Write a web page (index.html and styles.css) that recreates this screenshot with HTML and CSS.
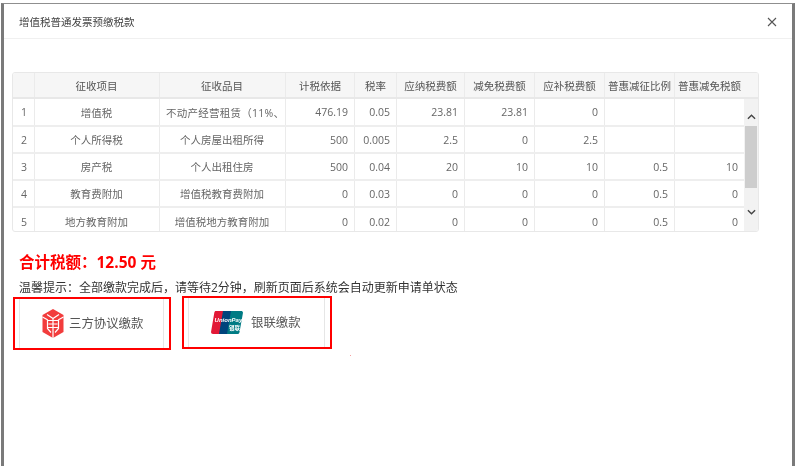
FILE: index.html
```html
<!DOCTYPE html>
<html lang="zh-CN">
<head>
<meta charset="utf-8">
<title>增值税普通发票预缴税款</title>
<link rel="stylesheet" href="styles.css">
</head>
<body>
<div class="modal">
  <header class="modal-head">
    <h1 class="modal-title">增值税普通发票预缴税款</h1>
    <svg class="close" viewBox="0 0 10 10" aria-label="关闭"><path d="M1 1l8 8M9 1l-8 8"/></svg>
  </header>
  <main class="modal-body">
    <div class="grid">
      <div class="grid-main">
        <div class="row row-head">
          <div class="c c0"></div><div class="c c1">征收项目</div><div class="c c2">征收品目</div><div class="c c3">计税依据</div><div class="c c4">税率</div><div class="c c5">应纳税费额</div><div class="c c6">减免税费额</div><div class="c c7">应补税费额</div><div class="c c8">普惠减征比例</div><div class="c c9">普惠减免税额</div>
        </div>
        <div class="row row-1">
          <div class="c c0 idx">1</div><div class="c c1">增值税</div><div class="c c2 clip">不动产经营租赁（11%、1</div><div class="c c3 num">476.19</div><div class="c c4 num">0.05</div><div class="c c5 num">23.81</div><div class="c c6 num">23.81</div><div class="c c7 num">0</div><div class="c c8 num"></div><div class="c c9 num"></div>
        </div>
        <div class="row">
          <div class="c c0 idx">2</div><div class="c c1">个人所得税</div><div class="c c2">个人房屋出租所得</div><div class="c c3 num">500</div><div class="c c4 num">0.005</div><div class="c c5 num">2.5</div><div class="c c6 num">0</div><div class="c c7 num">2.5</div><div class="c c8 num"></div><div class="c c9 num"></div>
        </div>
        <div class="row">
          <div class="c c0 idx">3</div><div class="c c1">房产税</div><div class="c c2">个人出租住房</div><div class="c c3 num">500</div><div class="c c4 num">0.04</div><div class="c c5 num">20</div><div class="c c6 num">10</div><div class="c c7 num">10</div><div class="c c8 num">0.5</div><div class="c c9 num">10</div>
        </div>
        <div class="row">
          <div class="c c0 idx">4</div><div class="c c1">教育费附加</div><div class="c c2">增值税教育费附加</div><div class="c c3 num">0</div><div class="c c4 num">0.03</div><div class="c c5 num">0</div><div class="c c6 num">0</div><div class="c c7 num">0</div><div class="c c8 num">0.5</div><div class="c c9 num">0</div>
        </div>
        <div class="row row-last">
          <div class="c c0 idx">5</div><div class="c c1">地方教育附加</div><div class="c c2">增值税地方教育附加</div><div class="c c3 num">0</div><div class="c c4 num">0.02</div><div class="c c5 num">0</div><div class="c c6 num">0</div><div class="c c7 num">0</div><div class="c c8 num">0.5</div><div class="c c9 num">0</div>
        </div>
      </div>
      <div class="scroll">
        <div class="scroll-head"></div>
        <div class="scroll-track">
          <svg class="arrow" viewBox="0 0 10 6"><path d="M1 5l4-4 4 4"/></svg>
          <div class="thumb"></div>
          <svg class="arrow arrow-down" viewBox="0 0 10 6"><path d="M1 1l4 4 4-4"/></svg>
        </div>
      </div>
    </div>
    <div class="total">合计税额：12.50 元</div>
    <div class="hint">温馨提示：全部缴款完成后，请等待2分钟，刷新页面后系统会自动更新申请单状态</div>
    <div class="pays">
      <div class="pay pay-a">
        <svg class="ico-box" viewBox="0 0 22 29">
          <path fill="#f23c3c" d="M11 0l10.500 6v17L11 29 .5 23V6z"/>
          <path fill="none" stroke="#fff" stroke-width="1.200" d="M.5 8l5 2.800M21.500 8l-5 2.800M5 5.500l6 4 6-4M6 11.500h10M6.500 15h9M5.500 18.500h11M11 9.500V29M5.500 10.500v9l3.500 4M16.500 10.500v9l-3.500 4"/>
        </svg>
        <span class="pay-text">三方协议缴款</span>
      </div>
      <div class="pay pay-b">
        <svg class="ico-union" viewBox="0 0 32 23">
          <path fill="#e21836" d="M5 0h9.500L10 23H2C.6 23-.2 22 .1 20.500L3.300 1.800C3.500.6 4 0 5 0z"/>
          <path fill="#00447c" d="M12 0h10l-4.500 23H8z"/>
          <path fill="#007b84" d="M20 0h10c1.400 0 2.200.8 1.900 2.200l-3.400 19c-.2 1.100-.9 1.800-2 1.800H16z"/>
          <text class="up-a" x="3.600" y="11">UnionPay</text>
          <text class="up-b" x="18" y="18.500">银联</text>
        </svg>
        <span class="pay-text">银联缴款</span>
      </div>
    </div>
    <i class="speck"></i>
  </main>
</div>
</body>
</html>
```
FILE: styles.css
```css
* { box-sizing: border-box; }
html, body { margin: 0; height: 100%; }
body {
  width: 796px;
  height: 466px;
  overflow: hidden;
  background: #fff;
  padding: 3px 1px 0 1px;
  font-family: "Open Sans", "Noto Sans CJK SC", "Liberation Sans", sans-serif;
  color: #666;
}
.modal {
  position: relative;
  width: 794px;
  height: 463px;
  background: #fff;
  border-top: 1px solid #8f8f8f;
  border-left: 3px solid #7a7a7a;
  border-right: 3px solid #7a7a7a;
  filter: blur(0.3px);
}
.modal-head {
  height: 35px;
  display: flex;
  align-items: center;
  justify-content: space-between;
  padding: 1px 15px 0 15px;
  border-bottom: 1px solid #f0f0f0;
}
.modal-title {
  margin: 0;
  font-size: 10.500px;
  font-weight: 400;
  color: #444;
}
.close { width: 10px; height: 10px; }
.close path { stroke: #555; stroke-width: 1.100; fill: none; }
.modal-body { padding: 33px 0 0 8px; }
.grid {
  display: flex;
  width: 747px;
  height: 160px;
  border: 1px solid #e8e8e8;
  border-radius: 3px;
  overflow: hidden;
  font-size: 10.500px;
}
.grid-main { width: 731px; flex: none; }
.row {
  display: flex;
  height: 27px;
  border-bottom: 2px solid #eee;
}
.row-head { height: 26px; background: #f6f6f6; color: #555; border-bottom: 2px solid #e8e8e8; }
.row-1 { height: 28px; }
.row-last { height: 24px; border-bottom: 0; }
.row-last .c { padding-top: 3px; }
.c {
  flex: none;
  display: flex;
  align-items: center;
  justify-content: center;
  border-right: 1px solid #ebebeb;
  white-space: nowrap;
  overflow: hidden;
}
.c0 { width: 22px; }
.c1 { width: 125px; padding-left: 1px; padding-right: 2px; }
.c2 { width: 126px; padding-left: 1px; padding-right: 2px; }
.c3 { width: 69px; }
.c4 { width: 42px; }
.c5 { width: 68px; }
.c6, .c7, .c8, .c9 { width: 70px; }
.idx { justify-content: flex-start; padding-left: 8px; }
.num { justify-content: flex-end; padding-right: 6px; }
.c2.clip { justify-content: flex-start; padding: 0 0 0 6px; letter-spacing: 0.25px; }
.scroll { width: 14px; flex: 1; display: flex; flex-direction: column; background: #f2f2f2; }
.scroll-head { height: 26px; flex: none; background: #f6f6f6; border-bottom: 2px solid #e8e8e8; }
.scroll-track { flex: 1; display: flex; flex-direction: column; align-items: center; padding: 15px 0 0; }
.arrow { width: 9px; height: 6px; flex: none; }
.arrow path { stroke: #444; stroke-width: 1.500; fill: none; }
.thumb { width: 12px; height: 62px; background: #cdcdcd; margin-top: 6px; flex: none; }
.arrow-down { margin-top: 21px; }
.total {
  margin: 20px 0 0 7px;
  font-size: 15.500px;
  line-height: 20px;
  font-weight: 700;
  color: #f00;
}
.hint {
  margin: 8px 0 0 7px;
  font-size: 12px;
  line-height: 16px;
  color: #333;
}
.pays { display: flex; align-items: flex-start; margin: 1px 0 0 1px; }
.pay {
  position: relative;
  display: flex;
  align-items: center;
  border: 2px solid #f00;
  font-size: 12.400px;
  color: #555;
}
.pay::after {
  content: "";
  position: absolute;
  top: 0;
  bottom: 0;
  left: 4px;
  right: 5px;
  border-left: 1px solid #e6e6e6;
  border-right: 1px solid #e6e6e6;
}
.pay-a { width: 158px; height: 53px; padding-left: 27px; gap: 5px; }
.pay-b { width: 150px; height: 53px; margin: -1px 0 0 11px; padding-left: 27px; gap: 8px; }
.ico-box { width: 22px; height: 29px; flex: none; }
.ico-union { width: 32px; height: 23px; flex: none; }
.up-a { font: italic 700 6px "Liberation Sans", sans-serif; fill: #fff; }
.up-b { font: 700 5.500px "Noto Sans CJK SC", sans-serif; fill: #fff; }
.pay-text { line-height: 16px; }
.speck { position: absolute; left: 346px; top: 351px; width: 1px; height: 1px; background: #f6a0a0; }
```
